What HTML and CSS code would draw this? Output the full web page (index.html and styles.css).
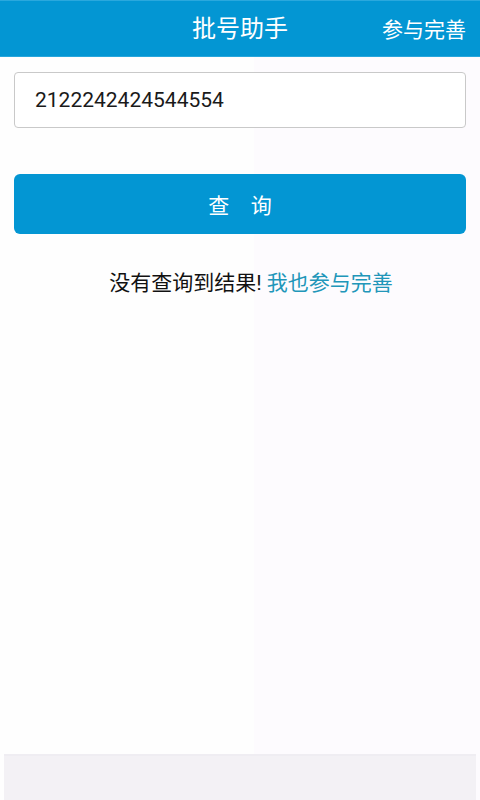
FILE: index.html
```html
<!DOCTYPE html>
<html lang="zh-CN">
<head>
    <meta charset="UTF-8">
    <meta name="viewport" content="width=device-width, initial-scale=1.0">
    <title>批号助手</title>
    <link rel="stylesheet" href="styles.css">
</head>
<body>
    <header class="top-bar">
        <h1 class="top-title">批号助手</h1>
        <a href="#" class="top-action">参与完善</a>
    </header>

    <main class="search-panel">
        <input class="batch-input" type="text" value="2122242424544554">
        <button class="search-button">查&emsp;询</button>
        <p class="result-msg">没有查询到结果! <a href="#" class="result-link">我也参与完善</a></p>
    </main>

    <footer class="bottom-bar"></footer>
</body>
</html>
```

FILE: styles.css
```css
:root {
    --primary-color: #0396d3;
    --link-color: #2196b9;
    --text-color: #111111;
    --background-color: #fefdfe;
    --footer-color: #f3f1f5;
}

* {
    margin: 0;
    padding: 0;
    box-sizing: border-box;
    font-family: 'Roboto', 'Noto Sans CJK SC', sans-serif;
}

html, body {
    height: 100%;
}

body {
    background: linear-gradient(to right, #fefefe 53%, #fdfbfe 53%);
    display: flex;
    flex-direction: column;
    color: var(--text-color);
}

.top-bar {
    height: 57px;
    background: var(--primary-color);
    border-top: 1px solid #2aa8dd;
    border-bottom: 1px solid #27a6dc;
    display: flex;
    align-items: center;
    justify-content: center;
    position: relative;
}

.top-title {
    color: white;
    font-size: 24px;
    font-weight: 400;
    margin-top: -5px;
}

.top-action {
    position: absolute;
    right: 14px;
    top: 12px;
    color: white;
    font-size: 21px;
    text-decoration: none;
}

.search-panel {
    flex: 1;
    padding: 15px 14px 0;
    display: flex;
    flex-direction: column;
}

.batch-input {
    height: 56px;
    border: 1px solid #c9c9c9;
    border-radius: 4px;
    padding: 0 20px;
    font-size: 21px;
    color: #1a1a1a;
    background: white;
    outline: none;
}

.search-button {
    margin-top: 46px;
    height: 60px;
    border: none;
    border-radius: 6px;
    background: var(--primary-color);
    color: white;
    font-size: 21px;
    cursor: pointer;
}

.result-msg {
    margin-top: 34px;
    padding-left: 22px;
    text-align: center;
    font-size: 21px;
    line-height: 30px;
}

.result-link {
    color: var(--link-color);
    text-decoration: none;
}

.bottom-bar {
    height: 46px;
    margin: 0 4px;
    background: var(--footer-color);
    border-top: 2px solid #efedf2;
}
```
